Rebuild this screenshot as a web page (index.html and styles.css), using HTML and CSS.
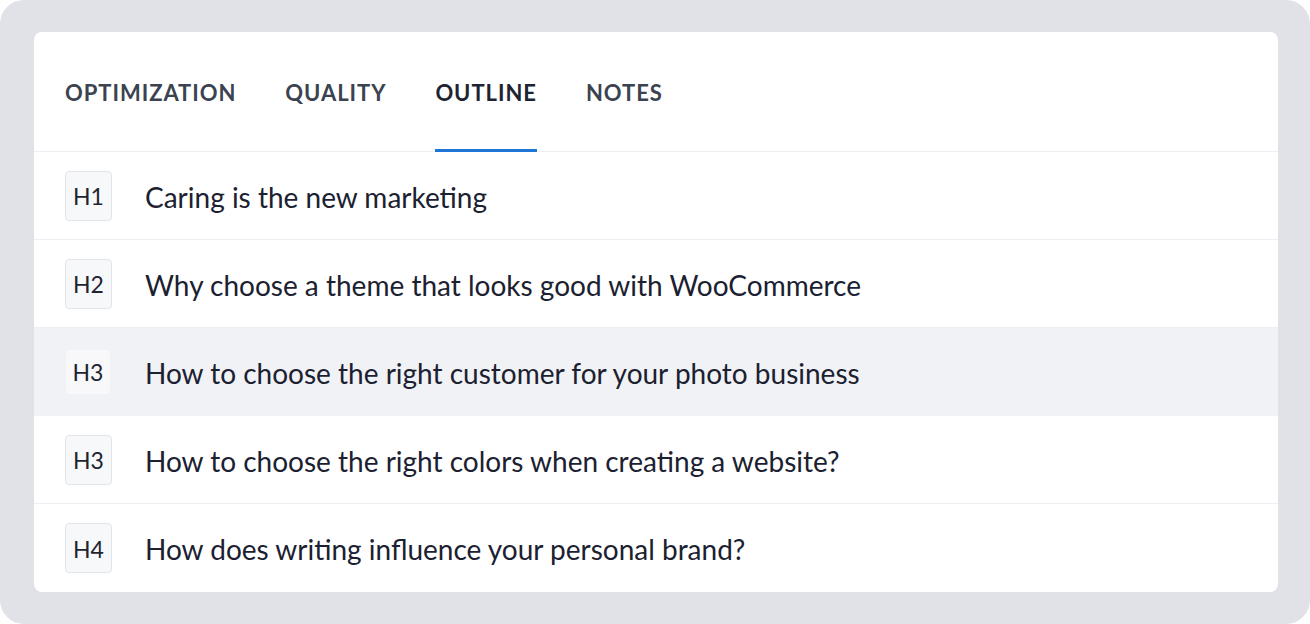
FILE: index.html
```html
<!DOCTYPE html>
<html>
<head>
<meta charset="utf-8">
<link rel="stylesheet" href="styles.css">
</head>
<body>
<div class="frame">
  <div class="card">
    <nav class="tabs">
      <div class="tab">OPTIMIZATION</div>
      <div class="tab">QUALITY</div>
      <div class="tab active">OUTLINE</div>
      <div class="tab">NOTES</div>
    </nav>
    <ul class="outline">
      <li class="row"><span class="badge">H1</span><span class="title">Caring is the new marketing</span></li>
      <li class="row"><span class="badge">H2</span><span class="title">Why choose a theme that looks good with WooCommerce</span></li>
      <li class="row hover"><span class="badge">H3</span><span class="title">How to choose the right customer for your photo business</span></li>
      <li class="row"><span class="badge">H3</span><span class="title">How to choose the right colors when creating a website?</span></li>
      <li class="row last"><span class="badge">H4</span><span class="title">How does writing influence your personal brand?</span></li>
    </ul>
  </div>
</div>
</body>
</html>
```
FILE: styles.css
```css
* { box-sizing: border-box; }
html, body { margin: 0; padding: 0; background: #ffffff; }
body { font-family: Lato, "Noto Sans", sans-serif; }
.frame {
  width: 1310px;
  height: 624px;
  background: #e1e2e7;
  border-radius: 24px;
  padding: 32px 32px 32px 34px;
}
.card {
  background: #ffffff;
  border-radius: 8px;
  height: 560px;
  overflow: hidden;
  display: flex;
  flex-direction: column;
}
.tabs {
  display: flex;
  gap: 49px;
  padding: 0 31px;
  height: 121px;
  border-bottom: 1px solid #eeeff3;
}
.tab {
  display: flex;
  align-items: center;
  padding-top: 4px;
  font-weight: 700;
  font-size: 22px;
  letter-spacing: 0.95px;
  color: #3b4350;
  border-bottom: 3px solid transparent;
  margin-bottom: -1px;
}
.tab.active {
  color: #1d2330;
  border-bottom-color: #1e75d6;
}
.outline {
  list-style: none;
  margin: 0;
  padding: 0;
}
.row {
  height: 88px;
  display: flex;
  align-items: center;
  padding-left: 31px;
  border-bottom: 1px solid #eeeff3;
}
.row.last { border-bottom: none; }
.row.hover { background: #f1f2f6; border-bottom-color: #f1f2f6; }
.badge {
  width: 47px;
  height: 50px;
  display: flex;
  align-items: center;
  justify-content: center;
  padding-top: 1px;
  border: 1px solid #e3e4e9;
  background: #f7f8fa;
  border-radius: 4px;
  font-size: 23px;
  color: #1f2530;
  margin-right: 33px;
}
.row.hover .badge {
  width: 44px;
  height: 44px;
  border: none;
  background: #f8f8fb;
  margin-left: 1px;
  margin-right: 35px;
}
.title {
  font-size: 28px;
  color: #1b2130;
  padding-top: 2px;
}
```
